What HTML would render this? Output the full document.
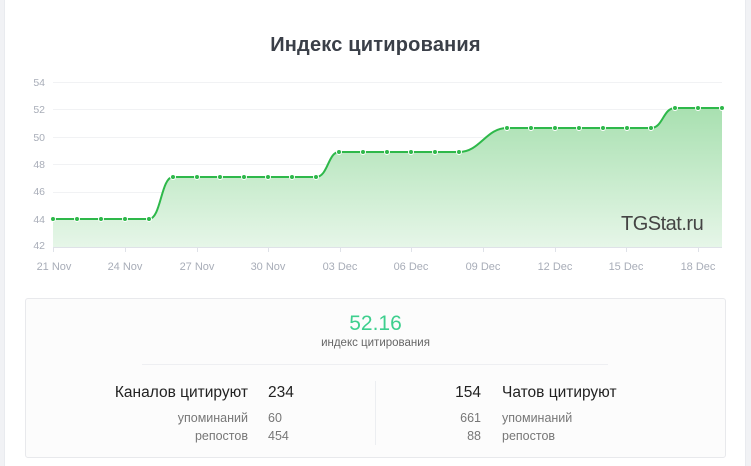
<!DOCTYPE html>
<html><head><meta charset="utf-8"><style>
*{margin:0;padding:0;box-sizing:border-box}
body{width:751px;height:466px;background:#f1f2f5;font-family:"Liberation Sans",sans-serif;position:relative;overflow:hidden}
.card{position:absolute;left:4px;top:0;width:742px;height:466px;background:#fff;border-left:1px solid #e9ebef;border-right:1px solid #e9ebef}
h1{position:absolute;left:0;right:0;top:34px;text-align:center;font-size:20px;font-weight:bold;color:#3a3f48;letter-spacing:0.2px}
.panel{position:absolute;left:25px;top:298px;width:701px;height:160px;background:#fcfcfc;border:1px solid #e8e9ec;border-radius:3px}
.t{position:absolute;white-space:nowrap}
</style></head><body>
<div class="card"></div>
<h1>Индекс цитирования</h1>
<svg width="751" height="290" style="position:absolute;left:0;top:0" font-family="Liberation Sans" font-size="10.5" fill="#a8adb8">
<defs><linearGradient id="g" x1="0" y1="0" x2="0" y2="1"><stop offset="0" stop-color="#a8e0b0"/><stop offset="1" stop-color="#e6f6e8"/></linearGradient></defs>
<g stroke="#f1f2f4" stroke-width="1">
<line x1="53" y1="82.5" x2="722" y2="82.5"/><line x1="53" y1="109.5" x2="722" y2="109.5"/><line x1="53" y1="137.5" x2="722" y2="137.5"/><line x1="53" y1="164.5" x2="722" y2="164.5"/><line x1="53" y1="192.5" x2="722" y2="192.5"/><line x1="53" y1="219.5" x2="722" y2="219.5"/>
</g>
<path d="M53 219 L149 219 C161 219 161 177 173 177 L316 177 C328 177 328 152 339 152 L459 152 C480 152 486 128 507 128 L651 128 C663 128 663 108 675 108 L722 108 L722 247 L53 247 Z" fill="url(#g)"/>
<path d="M53 219 L149 219 C161 219 161 177 173 177 L316 177 C328 177 328 152 339 152 L459 152 C480 152 486 128 507 128 L651 128 C663 128 663 108 675 108 L722 108" fill="none" stroke="#2eb84a" stroke-width="2"/>
<g fill="#2eb84a" stroke="#fff" stroke-width="1">
<circle cx="53" cy="219" r="2.5"/><circle cx="77" cy="219" r="2.5"/><circle cx="101" cy="219" r="2.5"/><circle cx="125" cy="219" r="2.5"/><circle cx="149" cy="219" r="2.5"/>
<circle cx="173" cy="177" r="2.5"/><circle cx="197" cy="177" r="2.5"/><circle cx="220" cy="177" r="2.5"/><circle cx="244" cy="177" r="2.5"/><circle cx="268" cy="177" r="2.5"/><circle cx="292" cy="177" r="2.5"/><circle cx="316" cy="177" r="2.5"/>
<circle cx="339" cy="152" r="2.5"/><circle cx="363" cy="152" r="2.5"/><circle cx="387" cy="152" r="2.5"/><circle cx="411" cy="152" r="2.5"/><circle cx="435" cy="152" r="2.5"/><circle cx="459" cy="152" r="2.5"/>
<circle cx="507" cy="128" r="2.5"/><circle cx="531" cy="128" r="2.5"/><circle cx="555" cy="128" r="2.5"/><circle cx="579" cy="128" r="2.5"/><circle cx="603" cy="128" r="2.5"/><circle cx="627" cy="128" r="2.5"/><circle cx="651" cy="128" r="2.5"/>
<circle cx="675" cy="108" r="2.5"/><circle cx="698" cy="108" r="2.5"/><circle cx="722" cy="108" r="2.5"/>
</g>
<line x1="53" y1="247.5" x2="722" y2="247.5" stroke="#dfe2e8"/>
<g stroke="#dfe2e8"><line x1="53.5" y1="247" x2="53.5" y2="252"/><line x1="125.5" y1="247" x2="125.5" y2="252"/><line x1="197.5" y1="247" x2="197.5" y2="252"/><line x1="268.5" y1="247" x2="268.5" y2="252"/><line x1="340.5" y1="247" x2="340.5" y2="252"/><line x1="411.5" y1="247" x2="411.5" y2="252"/><line x1="483.5" y1="247" x2="483.5" y2="252"/><line x1="555.5" y1="247" x2="555.5" y2="252"/><line x1="626.5" y1="247" x2="626.5" y2="252"/><line x1="698.5" y1="247" x2="698.5" y2="252"/></g>
<g text-anchor="end"><text x="45" y="86">54</text><text x="45" y="113">52</text><text x="45" y="141">50</text><text x="45" y="168">48</text><text x="45" y="195">46</text><text x="45" y="223">44</text><text x="45" y="249">42</text></g>
<g text-anchor="middle" font-size="11"><text x="54" y="270">21 Nov</text><text x="125" y="270">24 Nov</text><text x="197" y="270">27 Nov</text><text x="268" y="270">30 Nov</text><text x="340" y="270">03 Dec</text><text x="411" y="270">06 Dec</text><text x="483" y="270">09 Dec</text><text x="555" y="270">12 Dec</text><text x="626" y="270">15 Dec</text><text x="698" y="270">18 Dec</text></g>
<text x="621" y="230" font-size="20" fill="#444" letter-spacing="-0.5">TGStat.ru</text>
</svg>
<div class="panel"></div>
<div class="t" style="left:0;width:751px;text-align:center;top:312px;font-size:21px;color:#3ecf8e">52.16</div>
<div class="t" style="left:0;width:751px;text-align:center;top:337px;font-size:11.5px;color:#666">индекс цитирования</div>
<div style="position:absolute;left:142px;top:364px;width:466px;height:1px;background:#eeeff2"></div>
<div style="position:absolute;left:375px;top:381px;width:1px;height:64px;background:#eceef1"></div>
<div class="t" style="right:503px;top:384px;font-size:15.5px;color:#222">Каналов цитируют</div>
<div class="t" style="left:268px;top:384px;font-size:15.5px;color:#222">234</div>
<div class="t" style="right:503px;top:411px;font-size:12.5px;color:#777">упоминаний</div>
<div class="t" style="left:268px;top:411px;font-size:12.5px;color:#777">60</div>
<div class="t" style="right:503px;top:429px;font-size:12.5px;color:#777">репостов</div>
<div class="t" style="left:268px;top:429px;font-size:12.5px;color:#777">454</div>
<div class="t" style="right:270px;top:384px;font-size:15.5px;color:#222">154</div>
<div class="t" style="left:502px;top:384px;font-size:15.5px;color:#222">Чатов цитируют</div>
<div class="t" style="right:270px;top:411px;font-size:12.5px;color:#777">661</div>
<div class="t" style="left:502px;top:411px;font-size:12.5px;color:#777">упоминаний</div>
<div class="t" style="right:270px;top:429px;font-size:12.5px;color:#777">88</div>
<div class="t" style="left:502px;top:429px;font-size:12.5px;color:#777">репостов</div>
</body></html>
